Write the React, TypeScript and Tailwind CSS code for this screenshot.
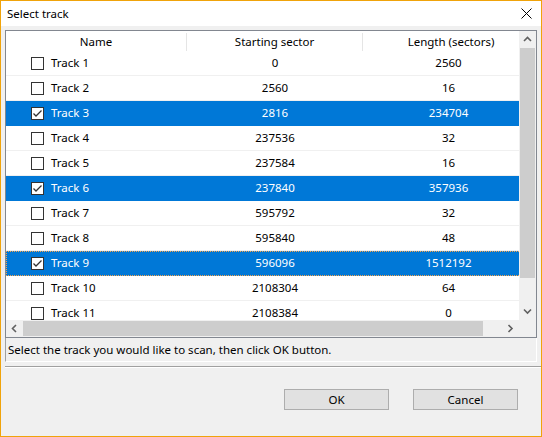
const rows = [
  { name: "Track 1", start: "0", len: "2560" },
  { name: "Track 2", start: "2560", len: "16" },
  { name: "Track 3", start: "2816", len: "234704", checked: true },
  { name: "Track 4", start: "237536", len: "32" },
  { name: "Track 5", start: "237584", len: "16" },
  { name: "Track 6", start: "237840", len: "357936", checked: true },
  { name: "Track 7", start: "595792", len: "32" },
  { name: "Track 8", start: "595840", len: "48" },
  { name: "Track 9", start: "596096", len: "1512192", checked: true, focus: true },
  { name: "Track 10", start: "2108304", len: "64" },
  { name: "Track 11", start: "2108384", len: "0" },
];

function Chevron({ dir }: { dir: "up" | "down" | "left" | "right" }) {
  const pts = {
    up: "1,5 4.5,1.5 8,5",
    down: "1,1.5 4.5,5 8,1.5",
    left: "5,1 1.5,4.5 5,8",
    right: "1.5,1 5,4.5 1.5,8",
  }[dir];
  const vertical = dir === "up" || dir === "down";
  return (
    <svg
      width={vertical ? 9 : 7}
      height={vertical ? 7 : 9}
      viewBox={vertical ? "0 0 9 7" : "0 0 7 9"}
    >
      <polyline points={pts} fill="none" stroke="#606060" strokeWidth={1.6} />
    </svg>
  );
}

function CheckBox({ checked }: { checked?: boolean }) {
  return (
    <div className="w-[13px] h-[13px] border border-[#333333] bg-white flex items-center justify-center shrink-0">
      {checked && (
        <svg width="11" height="11" viewBox="0 0 11 11">
          <polyline points="1.5,5.5 4,8 9.5,2.5" fill="none" stroke="#333333" strokeWidth={1.3} />
        </svg>
      )}
    </div>
  );
}

export default function App() {
  return (
    <div className="w-[542px] h-[437px] border border-[#f0a30a] bg-[#f0f0f0] flex flex-col font-['Noto_Sans',sans-serif] text-[11.5px] text-black leading-none">
      {/* title bar */}
      <div className="h-[25px] bg-white flex items-center justify-between pl-[6px] pr-[9px] shrink-0">
        <span>Select track</span>
        <svg width="11" height="11" viewBox="0 0 11 11">
          <path d="M0.5 0.5L10.5 10.5M10.5 0.5L0.5 10.5" stroke="#000" strokeWidth={1} />
        </svg>
      </div>

      <div className="px-[4px] pt-[4px] flex flex-col shrink-0">
        {/* list box */}
        <div className="w-[532px] h-[308px] border border-[#828790] bg-white flex flex-col">
          <div className="flex h-[289px]">
            <div className="w-[513px] flex flex-col overflow-hidden">
              <div className="flex h-[20px] shrink-0 bg-white">
                <div className="w-[180px] shrink-0 flex items-center justify-center pt-[2px]">Name</div>
                <div className="w-px h-[18px] self-end bg-[#e5e5e5] shrink-0" />
                <div className="w-[175px] shrink-0 flex items-center justify-center pt-[2px]">Starting sector</div>
                <div className="w-px h-[18px] self-end bg-[#e5e5e5] shrink-0" />
                <div className="w-[176px] shrink-0 flex items-center justify-center pt-[2px]">Length (sectors)</div>
              </div>
              <div className="flex-1 overflow-hidden">
                {rows.map((r) => (
                  <div
                    key={r.name}
                    className={`flex items-center h-[25px] w-[533px] border-b ${
                      r.checked
                        ? "bg-[#0078d7] text-white border-[#0078d7]"
                        : "bg-white border-[#f0f0f0]"
                    } ${r.focus ? "outline-1 outline-dotted outline-[#f7a44c] -outline-offset-1" : ""}`}
                  >
                    <div className="w-[181px] shrink-0 flex items-center pl-[25px] gap-[7px]">
                      <CheckBox checked={r.checked} />
                      <span>{r.name}</span>
                    </div>
                    <div className="w-[176px] shrink-0 text-center">{r.start}</div>
                    <div className="w-[176px] shrink-0 text-center pr-[5px]">{r.len}</div>
                  </div>
                ))}
              </div>
            </div>
            {/* vertical scrollbar */}
            <div className="w-[17px] bg-[#f0f0f0] flex flex-col shrink-0">
              <div className="h-[17px] flex items-center justify-center shrink-0">
                <Chevron dir="up" />
              </div>
              <div className="h-[230px] mx-[1px] bg-[#cdcdcd] shrink-0" />
              <div className="flex-1" />
              <div className="h-[17px] flex items-center justify-center shrink-0">
                <Chevron dir="down" />
              </div>
            </div>
          </div>
          <div className="flex h-[17px] shrink-0">
            <div className="w-[513px] bg-[#f0f0f0] flex">
              <div className="w-[17px] flex items-center justify-center shrink-0">
                <Chevron dir="left" />
              </div>
              <div className="w-[460px] my-[1px] bg-[#cdcdcd] shrink-0" />
              <div className="flex-1" />
              <div className="w-[17px] flex items-center justify-center shrink-0">
                <Chevron dir="right" />
              </div>
            </div>
            <div className="w-[17px] bg-[#f0f0f0]" />
          </div>
        </div>

        {/* status */}
        <div className="w-[532px] h-[24px] border-l border-l-[#a0a0a0] border-r border-r-white border-b border-b-white flex items-center pl-[2px]">
          Select the track you would like to scan, then click OK button.
        </div>
      </div>

      <div className="ml-[4px] mt-[4px] h-[2px] border-t border-t-[#a0a0a0] border-b border-b-white shrink-0" />

      <div className="flex-1 flex justify-end items-start pt-[21px] pr-[23px] gap-[24px]">
        <button className="w-[105px] h-[21px] border border-[#adadad] bg-[#e1e1e1] flex items-center justify-center">
          OK
        </button>
        <button className="w-[105px] h-[21px] border border-[#adadad] bg-[#e1e1e1] flex items-center justify-center">
          Cancel
        </button>
      </div>
    </div>
  );
}
